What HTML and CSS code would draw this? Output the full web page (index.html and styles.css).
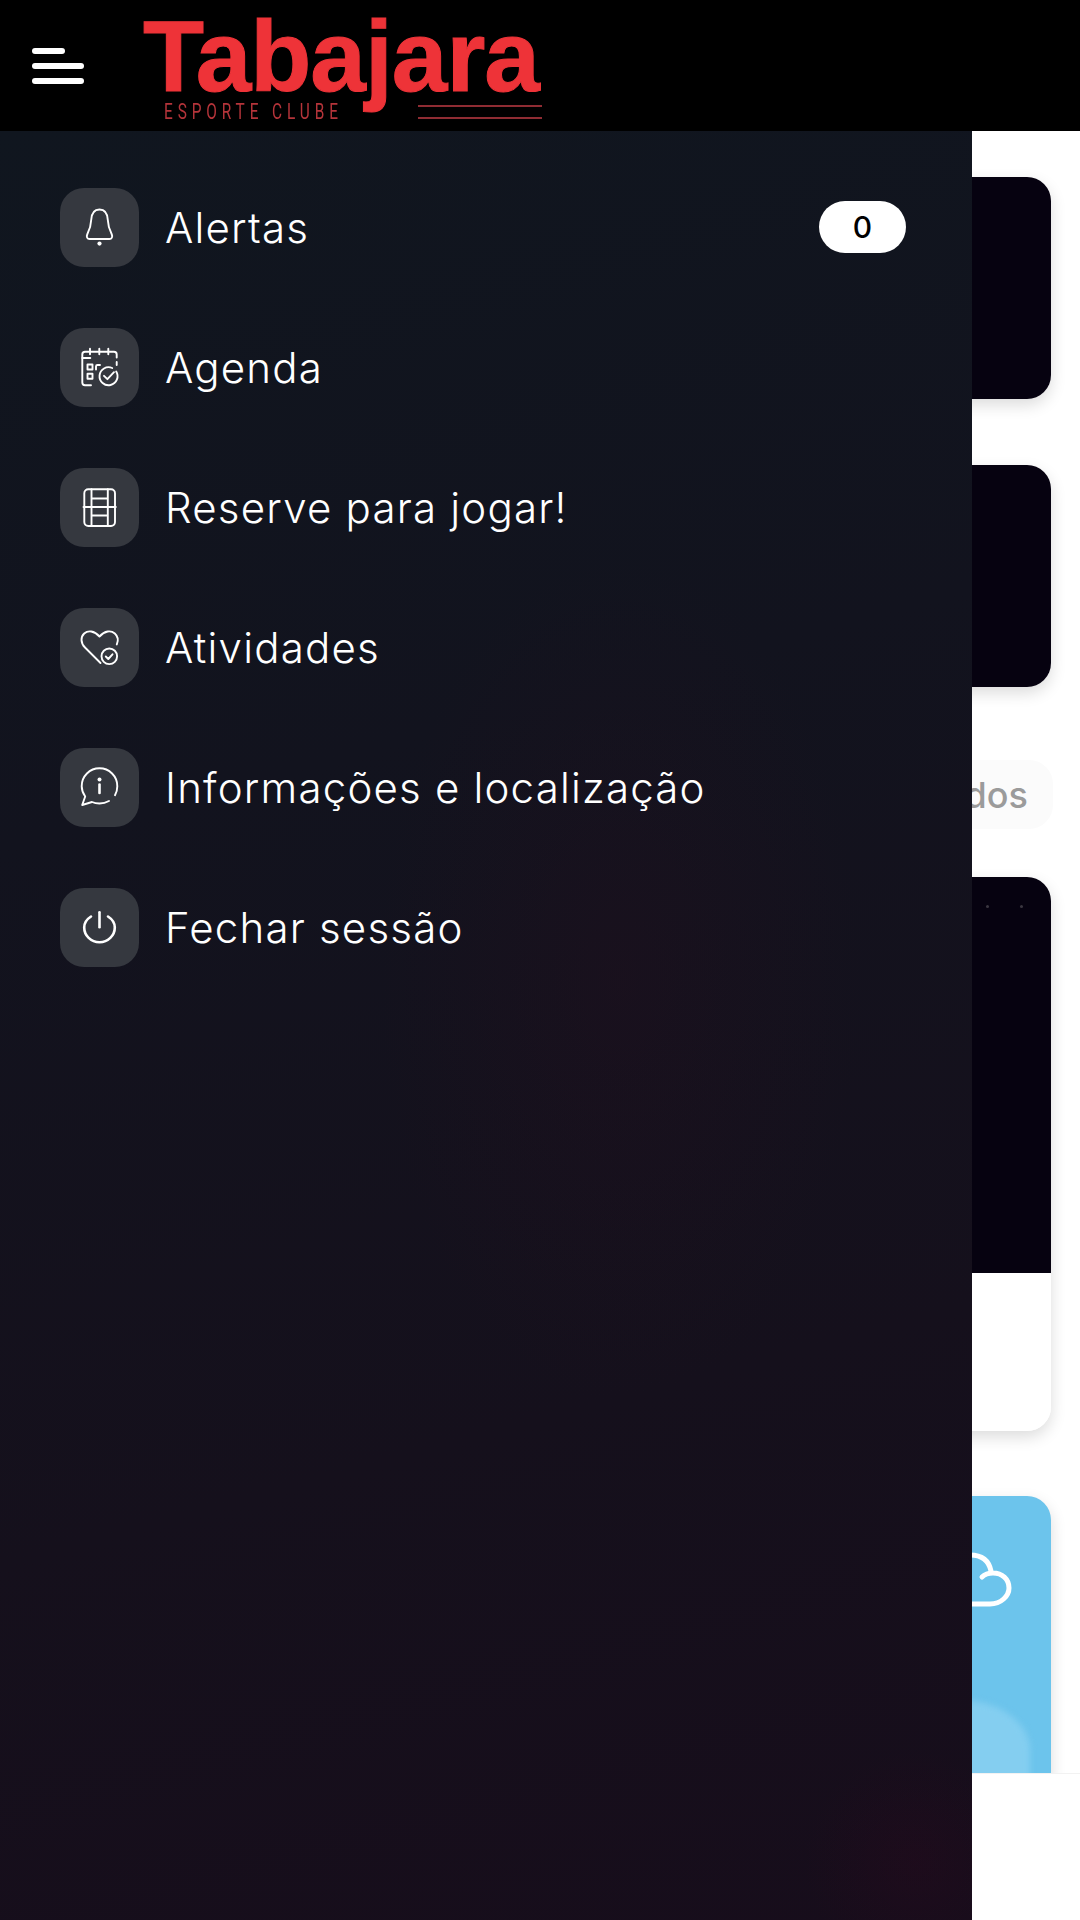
FILE: index.html
```html
<!DOCTYPE html>
<html lang="pt">
<head>
    <title>Tabajara Esporte Clube</title>
    <meta charset="UTF-8">
    <link rel="stylesheet" href="styles.css">
</head>
<body>
    <div class="app">
        <div class="header">
            <div class="burger">
                <span class="burger-line short"></span>
                <span class="burger-line"></span>
                <span class="burger-line"></span>
            </div>
            <div class="logo">
                <div class="logo-name">Tabajara</div>
                <div class="logo-sub">
                    <span class="logo-club">ESPORTE CLUBE</span>
                    <span class="logo-lines"></span>
                </div>
            </div>
        </div>

        <!-- Page behind the drawer -->
        <div class="content">
            <div class="card card-small"></div>
            <div class="card card-small"></div>
            <div class="chip-row"><div class="chip">Ver todos</div></div>
            <div class="card card-event">
                <div class="event-top">
                    <span class="event-dot"></span>
                    <span class="event-dot"></span>
                </div>
            </div>
            <div class="card card-weather">
                <svg class="weather-icon" viewBox="0 0 120 60">
                    <path d="M10 52H98C109 52 117 44 117 36 117 27 110 21 101 21 96 21 92 23 90 25M99 19C97 9 90 3 78 3"/>
                </svg>
                <div class="weather-cloud"></div>
            </div>
        </div>
        <div class="bottom-bar"></div>

        <!-- Drawer -->
        <div class="drawer">
            <div class="menu-item">
                <div class="menu-icon">
                    <svg viewBox="0 0 79 79">
                        <path d="M39.5 21.500c-5.500 0-8 4.500-8.300 10.500-.2 6-1.700 10-4 14.500-1 2.200 0 4.500 2.400 4.500h19.800c2.400 0 3.400-2.300 2.400-4.500-2.300-4.500-3.800-8.500-4-14.500-.3-6-2.800-10.500-8.300-10.500z"/>
                        <circle class="solid" cx="39.500" cy="55.600" r="2.100"/>
                    </svg>
                </div>
                <span class="menu-label">Alertas</span>
                <span class="badge">0</span>
            </div>
            <div class="menu-item">
                <div class="menu-icon">
                    <svg viewBox="0 0 79 79">
                        <path d="M31 57.300h-6c-1.500 0-2.700-1.200-2.700-2.700V26.500c0-1.500 1.200-2.700 2.700-2.700h29c1.500 0 2.700 1.200 2.700 2.700v3"/>
                        <path d="M30 20.700v5.500M39.300 20.700v5.500M48.300 20.700v5.500M22.300 30h8M56.700 34v3"/>
                        <rect x="27.500" y="36.500" width="5" height="5"/>
                        <rect x="27.500" y="45.800" width="5" height="5"/>
                        <path d="M36 41.500v-3c0-.8.700-1.500 1.500-1.500h2.500"/>
                        <path d="M56.200 43.500a9 9 0 1 1-4-3.500"/>
                        <path d="M44 47.800l3.400 3.400 6.600-7"/>
                    </svg>
                </div>
                <span class="menu-label">Agenda</span>
            </div>
            <div class="menu-item">
                <div class="menu-icon">
                    <svg viewBox="0 0 79 79">
                        <rect x="24.300" y="21.300" width="30.700" height="36.700" rx="4"/>
                        <path d="M31.500 21.300v36.700M47.800 21.300v36.700M23.500 39h32.300M31.500 30.500h16.300M31.500 47.500h16.300"/>
                    </svg>
                </div>
                <span class="menu-label">Reserve para jogar!</span>
            </div>
            <div class="menu-item">
                <div class="menu-icon">
                    <svg viewBox="0 0 79 79">
                        <path d="M40.500 55 25 39.500c-4.500-4.500-4.500-10.500-.8-14 3.700-3.300 10-3 15.300 3 5.300-6 11.600-6.300 15.300-3 3 2.700 3.700 7 2 11"/>
                        <circle cx="49.300" cy="48.300" r="7.800"/>
                        <path d="M45.800 48.500l2.500 2.500 4.200-4.700"/>
                    </svg>
                </div>
                <span class="menu-label">Atividades</span>
            </div>
            <div class="menu-item">
                <div class="menu-icon">
                    <svg viewBox="0 0 79 79">
                        <path d="M49 53c-2.700 1.500-6 2.500-9.500 2.500-2.800 0-5.300-.5-7.500-1.500l-9.800 3 3-8.500c-2-2.900-3.500-6.500-3.500-10.300 0-10 8-17.900 17.800-17.900s17.800 7.900 17.800 17.900c0 3.300-.8 6.300-2.300 9"/>
                        <circle class="solid" cx="39.500" cy="31.500" r="2"/>
                        <path class="heavy" d="M39.500 36.500v8.500"/>
                    </svg>
                </div>
                <span class="menu-label">Informações e localização</span>
            </div>
            <div class="menu-item">
                <div class="menu-icon">
                    <svg class="icon-heavy" viewBox="0 0 79 79">
                        <path d="M31 28.500c-4.200 2.700-6.800 6.500-6.800 11 0 8 6.800 14.700 15.300 14.700s15.300-6.700 15.300-14.700c0-4.500-2.600-8.300-6.800-11"/>
                        <path d="M39.500 24.300v15"/>
                    </svg>
                </div>
                <span class="menu-label">Fechar sessão</span>
            </div>
        </div>
    </div>
</body>
</html>
```
FILE: styles.css
```css
html, body {
    margin: 0;
    height: 100%;
    background-color: #ffffff;
    font-family: Inter, "Liberation Sans", sans-serif;
}
.app {
    position: relative;
    width: 1080px;
    height: 1920px;
    overflow: hidden;
    display: flex;
    flex-direction: column;
}
.header {
    background-color: #000000;
    height: 131px;
    flex-shrink: 0;
    display: flex;
    align-items: flex-start;
    position: relative;
    z-index: 3;
}
.burger {
    width: 52px;
    margin: 48px 0 0 32px;
    display: flex;
    flex-direction: column;
    gap: 9px;
}
.burger-line {
    display: block;
    height: 6px;
    border-radius: 3px;
    background-color: #ffffff;
}
.burger-line.short {
    width: 33px;
}
.logo {
    width: 399px;
    margin: 11px 0 0 59px;
}
.logo-name {
    font-family: "Liberation Sans", sans-serif;
    font-weight: 700;
    font-size: 100px;
    line-height: 90px;
    letter-spacing: -1px;
    -webkit-text-stroke: 1px #ee3338;
    color: #ee3338;
    white-space: nowrap;
}
.logo-sub {
    display: flex;
    align-items: center;
    margin-left: 21px;
}
.logo-club {
    font-family: Roboto, sans-serif;
    font-weight: 400;
    font-size: 22px;
    line-height: 22px;
    letter-spacing: 7px;
    color: #b5343a;
    white-space: nowrap;
    transform: scaleX(0.7);
    transform-origin: left center;
    margin-right: -77px;
}
.logo-lines {
    width: 124px;
    height: 10px;
    margin-left: auto;
    border-top: 2px solid #8f2c33;
    border-bottom: 2px solid #8f2c33;
}
.content {
    padding: 46px 29px 0;
    display: flex;
    flex-direction: column;
}
.card {
    border-radius: 24px;
    background-color: #060210;
    box-shadow: 0 6px 16px rgba(0, 0, 0, 0.14);
    overflow: hidden;
    flex-shrink: 0;
}
.card-small {
    height: 222px;
    margin-bottom: 66px;
}
.card-small + .chip-row {
    margin-top: 7px;
}
.chip-row {
    display: flex;
    justify-content: flex-end;
    margin: 0 -2px 48px 0;
}
.chip {
    height: 69px;
    line-height: 70px;
    padding: 0 25px;
    border-radius: 24px;
    background-color: #fbfbfb;
    color: #9b9b9b;
    font-size: 36px;
    font-weight: 500;
}
.card-event {
    height: 554px;
    margin-bottom: 65px;
    background: linear-gradient(#060210 396px, #ffffff 396px);
}
.event-top {
    display: flex;
    justify-content: flex-end;
    gap: 31px;
    padding: 28px 28px 0 0;
}
.event-dot {
    width: 3px;
    height: 3px;
    border-radius: 50%;
    background-color: #3a3640;
}
.card-weather {
    height: 300px;
    position: relative;
    background-color: #6cc4ec;
}
.weather-icon {
    position: absolute;
    top: 56px;
    right: 39px;
    width: 120px;
    height: 60px;
    fill: none;
    stroke: #ffffff;
    stroke-width: 5;
    stroke-linecap: round;
}
.weather-cloud {
    position: absolute;
    right: 21px;
    top: 204px;
    width: 200px;
    height: 100px;
    border-top-right-radius: 70px 50px;
    background-color: #84cef0;
    filter: blur(3px);
}
.bottom-bar {
    position: absolute;
    left: 0;
    right: 0;
    bottom: 0;
    height: 147px;
    background-color: #ffffff;
    border-top: 1px solid #f2f2f2;
    box-sizing: border-box;
    z-index: 1;
}
.drawer {
    position: absolute;
    top: 131px;
    left: 0;
    bottom: 0;
    width: 972px;
    box-sizing: border-box;
    padding: 57px 66px 0 60px;
    display: flex;
    flex-direction: column;
    gap: 61px;
    z-index: 2;
    background:
        radial-gradient(ellipse 110px 110px at 915px 1730px, rgba(45, 8, 30, 0.3), transparent),
        radial-gradient(ellipse 240px 420px at 620px 850px, rgba(40, 14, 30, 0.28), transparent),
        linear-gradient(165deg, #10161f 0%, #12131e 35%, #15101c 70%, #170d1b 100%);
}
.menu-item {
    display: flex;
    align-items: center;
    height: 79px;
}
.menu-icon {
    width: 79px;
    height: 79px;
    flex-shrink: 0;
    border-radius: 24px;
    background-color: #35383f;
}
.menu-icon svg {
    display: block;
    width: 79px;
    height: 79px;
    fill: none;
    stroke: #ffffff;
    stroke-width: 1.9;
    stroke-linecap: round;
    stroke-linejoin: round;
}
.menu-icon svg.icon-heavy,
.menu-icon svg .heavy {
    stroke-width: 2.6;
}
.menu-icon svg .solid {
    fill: #ffffff;
    stroke: none;
}
.menu-label {
    margin-left: 26px;
    font-size: 42px;
    font-weight: 300;
    letter-spacing: 1.2px;
    color: #ffffff;
    white-space: nowrap;
}
.badge {
    margin: 0 0 1px auto;
    width: 87px;
    height: 52px;
    line-height: 52px;
    border-radius: 26px;
    background-color: #ffffff;
    color: #000000;
    font-size: 30px;
    font-weight: 500;
    text-align: center;
}
```
